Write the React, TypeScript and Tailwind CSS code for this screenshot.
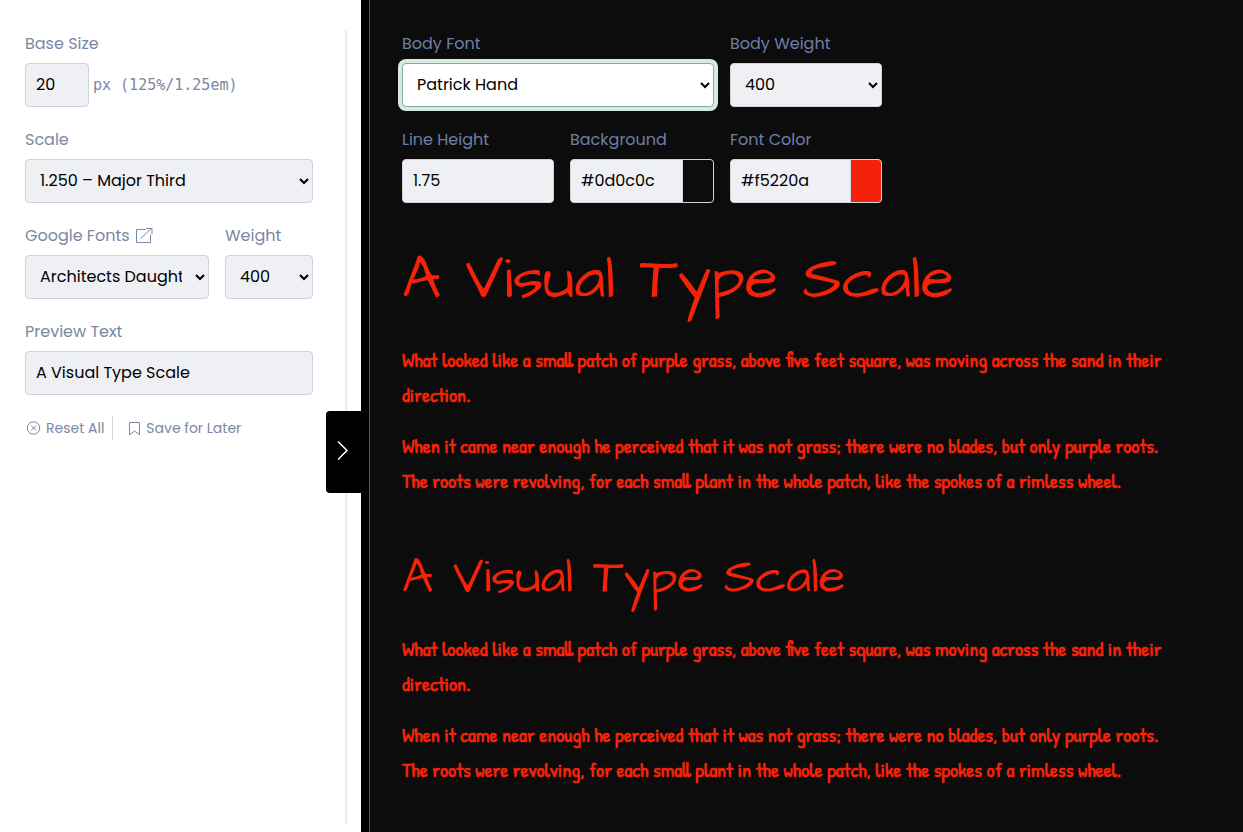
import type { ReactNode } from 'react';

const control =
  'block h-11 w-full rounded border border-[#cfd3de] bg-[#eff0f4] px-2.5 pb-0.5 text-base text-black outline-none';

function Field({ id, label, className, children }: { id: string; label: ReactNode; className: string; children: ReactNode }) {
  return (
    <div className={className}>
      <div className="mb-1.5 flex h-[26px] items-center gap-1.5 whitespace-nowrap">
        {typeof label === 'string' ? <label htmlFor={id}>{label}</label> : label}
      </div>
      {children}
    </div>
  );
}

function ColorField({ id, label, value, className }: { id: string; label: string; value: string; className: string }) {
  return (
    <Field id={id} label={label} className={className}>
      <div className="flex h-11 overflow-hidden rounded border border-[#cfd3de] bg-[#eff0f4]">
        <input id={id} defaultValue={value} className="w-0 min-w-0 flex-1 border-r border-[#cfd3de] px-2.5 text-black outline-none" />
        <input
          type="color"
          aria-label={label + ' swatch'}
          defaultValue={value}
          className="block h-full w-[30px] appearance-none border-0 p-0 [&::-webkit-color-swatch]:rounded-none [&::-webkit-color-swatch]:border-0 [&::-webkit-color-swatch-wrapper]:p-0"
        />
      </div>
    </Field>
  );
}

function Sample() {
  return (
    <div className="max-w-[776px] space-y-4 font-['Patrick_Hand','Open_Sans',sans-serif] text-xl leading-[35px] font-bold">
      <p>
        What looked like a small patch of purple grass, above five feet square, was moving across the sand in their
        direction.
      </p>
      <p>
        When it came near enough he perceived that it was not grass; there were no blades, but only purple roots. The
        roots were revolving, for each small plant in the whole patch, like the spokes of a rimless wheel.
      </p>
    </div>
  );
}

export default function App() {
  return (
    <div className="flex min-h-screen bg-[#0d0c0c] font-['Poppins','Inter',sans-serif] text-base font-normal">
      <aside className="relative flex w-[361px] shrink-0 bg-white pt-[30px] pr-3.5 pb-[7px] pl-[25px] text-[#7a87a5]">
        <form className="flex-1 space-y-5 border-r-2 border-[#ebecf1] pt-px pr-8">
          <Field id="base" label="Base Size" className="w-full">
            <div className="flex items-center gap-1">
              <input id="base" defaultValue="20" className="h-11 w-16 rounded border border-[#cfd3de] bg-[#eff0f4] px-2.5 pb-0.5 text-black outline-none" />
              <span className="font-['DejaVu_Sans_Mono',monospace] text-[15px] leading-6 whitespace-nowrap">px (125%/1.25em)</span>
            </div>
          </Field>
          <Field id="scale" label="Scale" className="w-full">
            <select id="scale" className={control}>
              <option>1.250 – Major Third</option>
            </select>
          </Field>
          <div className="flex gap-4">
            <Field
              id="font"
              label={
                <>
                  <label htmlFor="font">Google Fonts</label>
                  <a href="#fonts" aria-label="Open Google Fonts">
                    <svg width="17" height="17" viewBox="0 0 17 17" fill="none" stroke="currentColor">
                      <path d="M9.5 1.5h-9v13h14v-8M4.5 10.5l11-10M10 .5h6V6" />
                    </svg>
                  </a>
                </>
              }
              className="min-w-0 flex-1"
            >
              <select id="font" className={control}>
                <option>Architects Daughter</option>
              </select>
            </Field>
            <Field id="weight" label="Weight" className="w-[88px]">
              <select id="weight" className={control}>
                <option>400</option>
              </select>
            </Field>
          </div>
          <Field id="preview" label="Preview Text" className="w-full">
            <input id="preview" defaultValue="A Visual Type Scale" className={control} />
          </Field>
          <div className="flex h-[26px] items-center text-sm whitespace-nowrap">
            <button type="button" className="flex h-6 items-center gap-1 border-r border-[#cfd3de] pr-2">
              <svg width="17" height="15" viewBox="0 0 17 15" fill="none" stroke="currentColor">
                <circle cx="8.5" cy="7" r="6.2" />
                <path d="M6 4.5l5 5M11 4.5l-5 5" />
              </svg>
              Reset All
            </button>
            <button type="button" className="flex h-6 items-center gap-1 pl-3">
              <svg width="17" height="15" viewBox="0 0 17 15" fill="none" stroke="currentColor">
                <path d="M4.5 1.5h10v12.3l-5-3.8-5 3.8z" />
              </svg>
              Save for Later
            </button>
          </div>
        </form>
        <button
          type="button"
          aria-label="Expand panel"
          className="absolute top-[411px] right-0 flex h-[82px] w-[35px] items-center rounded-l bg-black pb-1 pl-[11px] text-white"
        >
          <svg width="12" height="20" viewBox="0 0 12 20" fill="none" stroke="currentColor" strokeWidth="1.5">
            <path d="M1 1.5l9 9-9 9" />
          </svg>
        </button>
      </aside>
      <div className="w-[9px] shrink-0 border-r border-[#555555] bg-black" />
      <main className="min-w-0 flex-1 px-8 pt-[31px] text-[#f5220a]">
        <form className="max-w-[480px] space-y-5 text-[#6c7fa8]">
          <div className="flex gap-4">
            <Field id="body-font" label="Body Font" className="min-w-0 flex-1">
              <select
                id="body-font"
                className="block h-11 w-full rounded border border-[#7fb199] bg-white px-2.5 pb-0.5 text-black ring-4 ring-[#d8e9e0] outline-none"
              >
                <option>Patrick Hand</option>
              </select>
            </Field>
            <Field id="body-weight" label="Body Weight" className="w-[152px]">
              <select id="body-weight" className={control}>
                <option>400</option>
              </select>
            </Field>
          </div>
          <div className="flex gap-4">
            <Field id="line-height" label="Line Height" className="w-[152px]">
              <input id="line-height" defaultValue="1.75" className={control} />
            </Field>
            <ColorField id="background" label="Background" value="#0d0c0c" className="min-w-0 flex-1" />
            <ColorField id="font-color" label="Font Color" value="#f5220a" className="w-[152px]" />
          </div>
        </form>
        <h1 className="pt-[39px] pb-6 font-['Architects_Daughter','Inter',sans-serif] text-[61px] leading-[76px]">A Visual Type Scale</h1>
        <Sample />
        <h2 className="pt-[50px] pb-[22px] font-['Architects_Daughter','Inter',sans-serif] text-[49px] leading-[61px]">A Visual Type Scale</h2>
        <Sample />
      </main>
    </div>
  );
}
